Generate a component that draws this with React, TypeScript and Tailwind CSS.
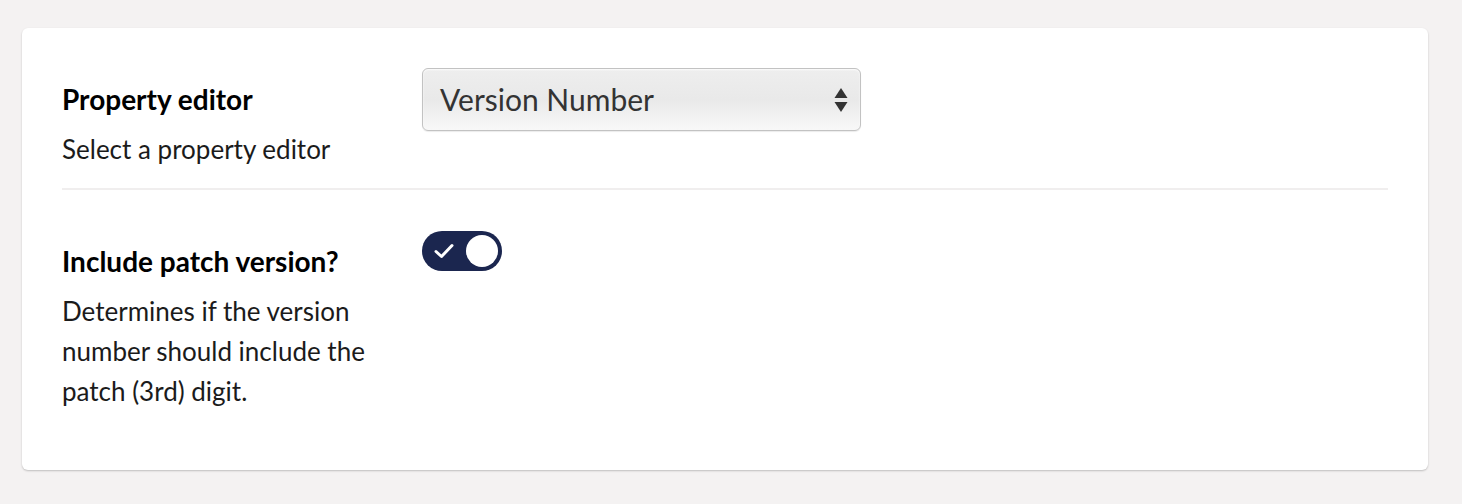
const Label = ({ title, desc }: { title: string; desc: string }) => (
  <div className="w-[360px] shrink-0 pt-[11px] pr-5">
    <h3 className="text-[28px] leading-[40px] font-bold text-[#000]">{title}</h3>
    <p className="mt-[10px] text-[26px] leading-[40px] text-[#1b1b1b]">{desc}</p>
  </div>
);

const App = () => {
  return (
    <div className="min-h-[504px] bg-[#f4f2f2] pl-[22px] pr-[34px] pt-[28px] pb-[34px] font-['Lato',sans-serif]">
      <div className="rounded-[6px] bg-white px-10 pt-10 pb-10 shadow-[0_1px_2px_rgba(0,0,0,0.22)]">
        <div className="flex border-b-2 border-[#f0eeee] pb-[19px]">
          <Label title="Property editor" desc="Select a property editor" />
          <div className="flex h-[63px] w-[439px] items-center justify-between rounded-[6px] border border-[#c2c2c2] bg-gradient-to-b from-[#eeeeee] via-[#e9e9e9] to-[#f8f8f8] pl-[17px] pr-[12px] shadow-[inset_0_1px_2px_rgba(255,255,255,0.9),0_1px_1px_rgba(0,0,0,0.08)]">
            <span className="text-[30px] text-[#333]">Version Number</span>
            <svg width="14" height="26" viewBox="0 0 14 26" className="text-[#333]">
              <path d="M7 1 L13.5 11 H0.5 Z" fill="currentColor" />
              <path d="M7 25 L13.5 15 H0.5 Z" fill="currentColor" />
            </svg>
          </div>
        </div>
        <div className="flex pt-10 pb-[19px]">
          <Label
            title="Include patch version?"
            desc="Determines if the version number should include the patch (3rd) digit."
          />
          <div className="mt-[1px] flex h-[40px] w-[80px] items-center justify-between rounded-full bg-[#1b264f] pl-[12px] pr-[4px]">
            <svg width="20" height="16" viewBox="0 0 20 16">
              <path d="M2 8.5 L7.5 13.5 L18 2.5" stroke="white" strokeWidth="3" fill="none" strokeLinecap="round" strokeLinejoin="round" />
            </svg>
            <div className="h-[32px] w-[32px] rounded-full bg-white" />
          </div>
        </div>
      </div>
    </div>
  );
};

export default App;
